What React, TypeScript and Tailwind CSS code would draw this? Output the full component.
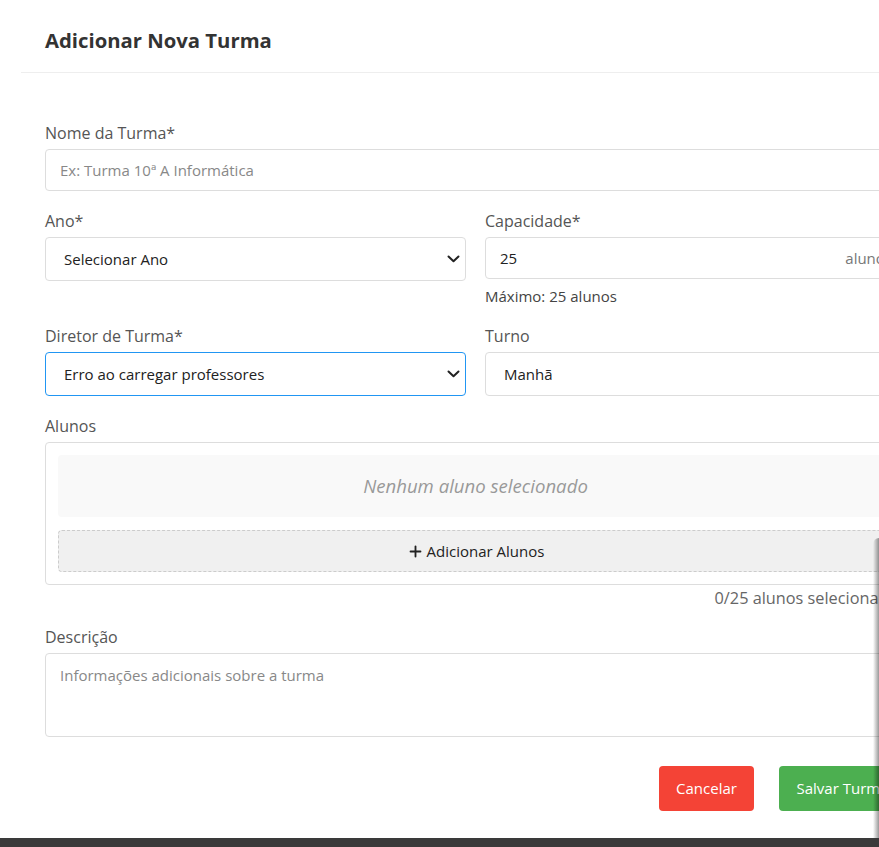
import { Plus } from "lucide-react";

const labelCls = "block text-[16px] leading-[24px] text-[#555] mb-[4px]";
const inputCls =
  "block w-full h-[42px] rounded-[4px] border border-[#ddd] bg-white px-[14px] text-[15px] text-[#222] placeholder:text-[#888] outline-none";

function Chevron() {
  return (
    <svg
      width="13"
      height="8"
      viewBox="0 0 13 8"
      className="pointer-events-none absolute right-[5px] top-1/2 -translate-y-1/2"
    >
      <path d="M1.5 1.5 L6.5 6.3 L11.5 1.5" fill="none" stroke="#222" strokeWidth="2" strokeLinecap="round" strokeLinejoin="round" />
    </svg>
  );
}

function FakeSelect({ value, focused }: { value: string; focused?: boolean }) {
  return (
    <div
      className={
        "relative flex h-[44px] items-center rounded-[4px] border bg-white pl-[18px] text-[15px] text-[#222] " +
        (focused ? "border-[#2196f3]" : "border-[#ddd]")
      }
    >
      <span>{value}</span>
      <Chevron />
    </div>
  );
}

export default function App() {
  return (
    <div
      className="relative flex h-[847px] w-[879px] flex-col overflow-hidden bg-white"
      style={{ fontFamily: '"Open Sans", "Noto Sans", sans-serif' }}
    >
      <div className="flex-1 pl-[21px]">
        <div className="w-[909px]">
          <div className="h-[73px] border-b border-[#eee] pl-[24px] pt-[24px]">
            <h2 className="text-[20.3px] font-bold leading-[32px] text-[#333]">Adicionar Nova Turma</h2>
          </div>

          <form className="px-[24px] pt-[48px]" onSubmit={(e) => e.preventDefault()}>
            <div className="mb-[18px]">
              <label className={labelCls}>Nome da Turma*</label>
              <input className={inputCls} placeholder="Ex: Turma 10ª A Informática" />
            </div>

            <div className="mb-[18px] grid grid-cols-2 gap-x-[19px]">
              <div>
                <label className={labelCls}>Ano*</label>
                <FakeSelect value="Selecionar Ano" />
              </div>
              <div>
                <label className={labelCls}>Capacidade*</label>
                <div className="relative">
                  <input className={inputCls} defaultValue="25" />
                  <span className="absolute right-[14px] top-1/2 -translate-y-1/2 text-[15px] text-[#777]">alunos</span>
                </div>
                <p className="mt-[7px] text-[15px] leading-[20px] text-[#444]">Máximo: 25 alunos</p>
              </div>
            </div>

            <div className="mb-[18px] grid grid-cols-2 gap-x-[19px]">
              <div>
                <label className={labelCls}>Diretor de Turma*</label>
                <FakeSelect value="Erro ao carregar professores" focused />
              </div>
              <div>
                <label className={labelCls}>Turno</label>
                <FakeSelect value="Manhã" />
              </div>
            </div>

            <div className="mb-[15px]">
              <label className={labelCls}>Alunos</label>
              <div className="rounded-[4px] border border-[#ddd] p-[12px]">
                <div className="rounded-[4px] bg-[#f9f9f9] py-[20px] text-center text-[18.6px] italic leading-[22px] text-[#999]">
                  Nenhum aluno selecionado
                </div>
                <button
                  type="button"
                  className="mt-[13px] flex h-[42px] w-full items-center justify-center gap-[3px] rounded-[4px] border border-dashed border-[#ccc] bg-[#f0f0f0] text-[15px] text-[#222]"
                >
                  <Plus size={17} strokeWidth={2.6} />
                  Adicionar Alunos
                </button>
              </div>
              <p className="mt-[1px] text-right text-[16.3px] leading-[24px] text-[#666]">0/25 alunos selecionados</p>
            </div>

            <div>
              <label className={labelCls}>Descrição</label>
              <textarea
                className="block h-[84px] w-full resize-none rounded-[4px] border border-[#ddd] px-[14px] py-[10px] text-[15px] text-[#222] placeholder:text-[#888] outline-none"
                placeholder="Informações adicionais sobre a turma"
              />
            </div>

            <div className="mt-[29px] flex justify-end gap-[25px]">
              <button type="button" className="h-[45px] w-[95px] rounded-[4px] bg-[#f44336] text-[15px] text-white">
                Cancelar
              </button>
              <button type="button" className="h-[45px] w-[127px] rounded-[4px] bg-[#4caf50] text-[15px] text-white">
                Salvar Turma
              </button>
            </div>
          </form>
        </div>
      </div>
      <div className="h-[9px] bg-[#3a3a3a]" />
      <div className="pointer-events-none absolute right-0 top-[538px] h-[300px] w-[6px] rounded-tl-[6px] bg-gradient-to-r from-transparent to-black/40" />
    </div>
  );
}
